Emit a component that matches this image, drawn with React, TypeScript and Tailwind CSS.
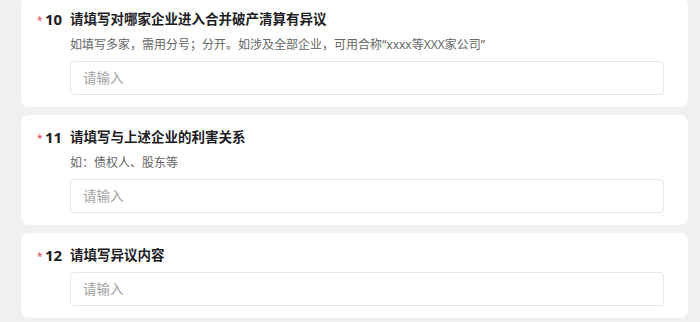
import React from "react";

type Question = {
	no: number;
	title: string;
	hint?: string;
};

const questions: Question[] = [
	{
		no: 10,
		title: "请填写对哪家企业进入合并破产清算有异议",
		hint: "如填写多家，需用分号；分开。如涉及全部企业，可用合称“xxxx等XXX家公司”",
	},
	{ no: 11, title: "请填写与上述企业的利害关系", hint: "如：债权人、股东等" },
	{ no: 12, title: "请填写异议内容" },
];

function QuestionCard({ q }: { q: Question }) {
	return (
		<div className="bg-white rounded-lg pl-4 pr-6 pt-3 pb-3">
			<div className="flex items-center h-5">
				<span className="w-[8px] h-5 flex items-center">
					<span className="text-[10px] leading-none text-[#e5484d] translate-y-[1px]">*</span>
				</span>
				<span className="w-[25px] text-[15px] font-bold text-[#1d1d1f]">{q.no}</span>
				<span className="text-[13.5px] font-bold text-[#1d1d1f]">{q.title}</span>
			</div>
			<div className="pl-[33px]">
				{q.hint && (
					<div className="mt-[6px] text-[12px] leading-5 text-[#666]">{q.hint}</div>
				)}
				<div className={`${q.hint ? "mt-[6px]" : "mt-[7px]"} h-[34px] border border-[#e6e7ea] rounded flex items-center px-3`}>
					<span className="text-[13.5px] text-[#a3a3a3]">请输入</span>
				</div>
			</div>
		</div>
	);
}

export default function App() {
	return (
		<div
			className="w-[700px] h-[322px] overflow-hidden bg-[#eff0f2] pl-[21px] pr-[12px]"
			style={{ fontFamily: '"Noto Sans", "Noto Sans CJK SC", sans-serif' }}
		>
			<div className="flex flex-col gap-2 -mt-[3px]">
				{questions.map((q) => (
					<QuestionCard key={q.no} q={q} />
				))}
			</div>
		</div>
	);
}
